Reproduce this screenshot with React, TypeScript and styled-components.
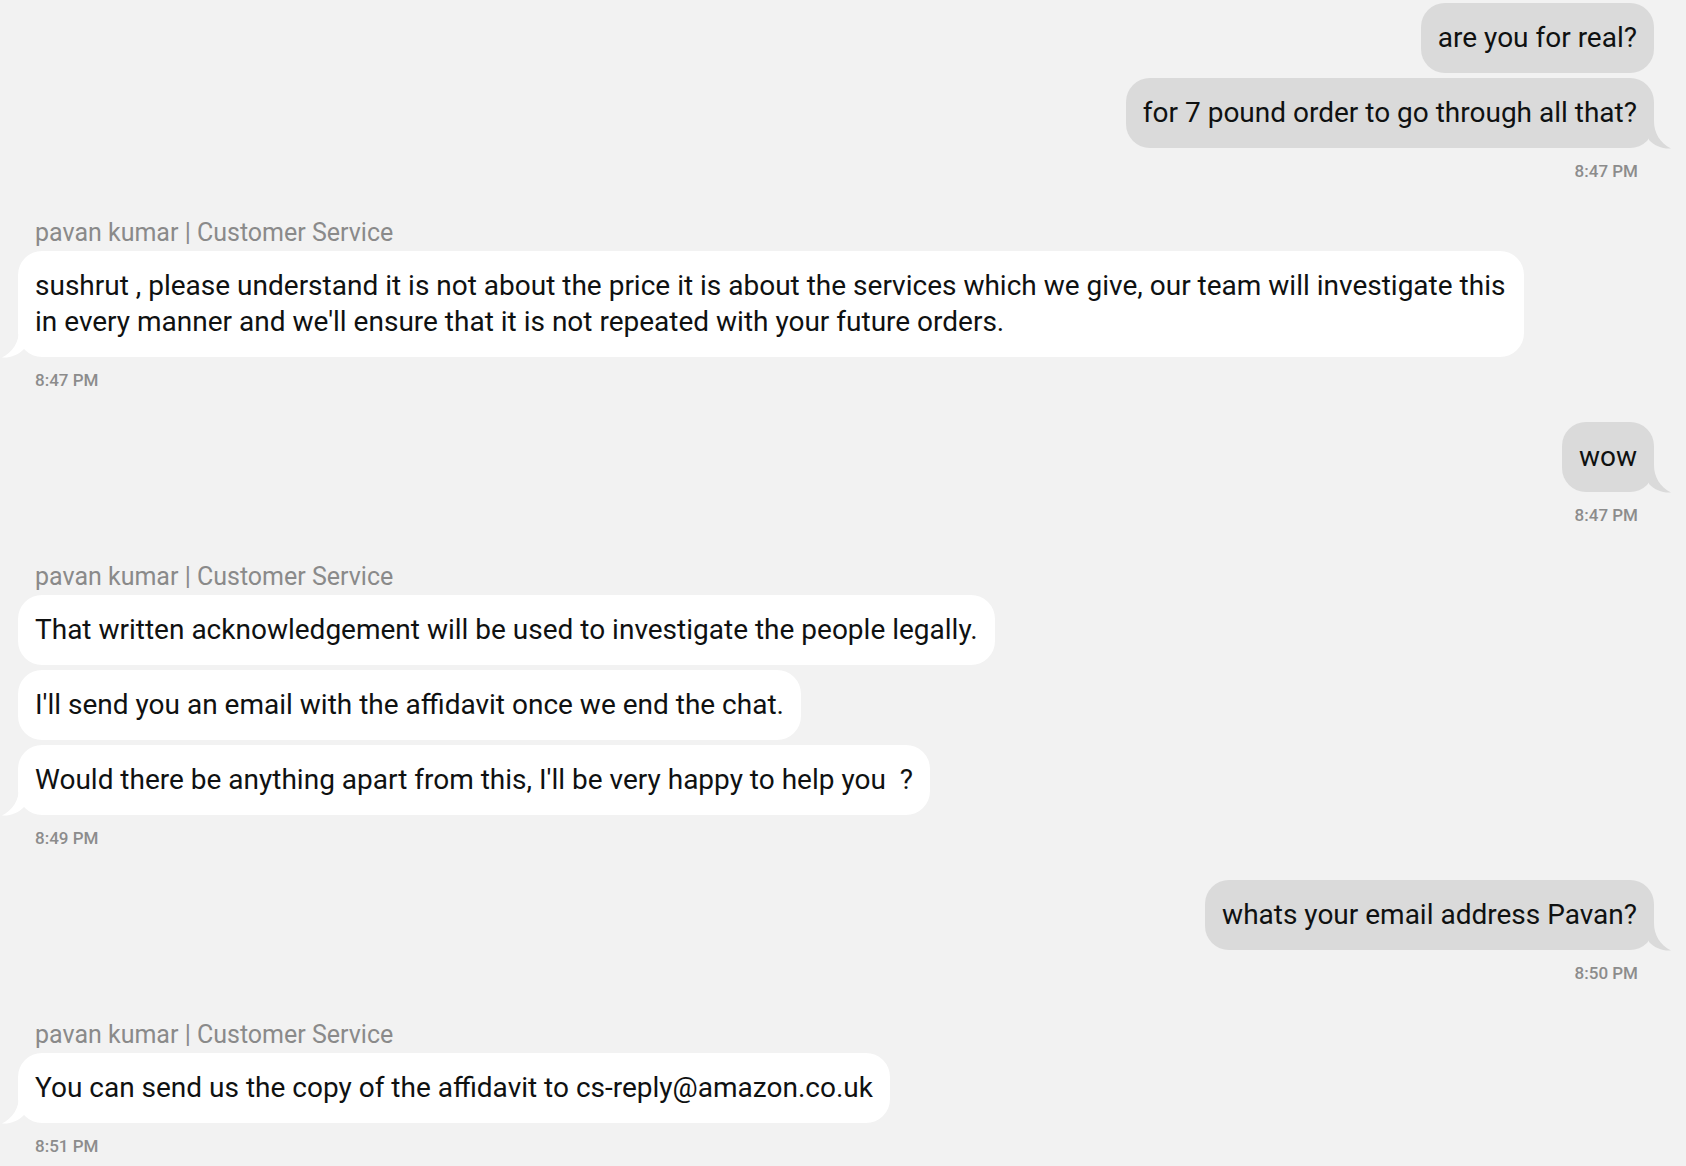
import React from "react";
import styled, { createGlobalStyle } from "styled-components";

const GlobalStyle = createGlobalStyle`
  html, body {
    margin: 0;
    padding: 0;
    background: #f2f2f2;
  }
  body {
    font-family: Roboto, "Liberation Sans", Arial, sans-serif;
    color: #0f1111;
  }
`;

type Side = "out" | "in";

interface Group {
  side: Side;
  sender?: string;
  messages: string[];
  time: string;
}

const groups: Group[] = [
  {
    side: "out",
    messages: ["are you for real?", "for 7 pound order to go through all that?"],
    time: "8:47 PM",
  },
  {
    side: "in",
    sender: "pavan kumar | Customer Service",
    messages: [
      "sushrut , please understand it is not about the price it is about the services which we give, our team will investigate this in every manner and we'll ensure that it is not repeated with your future orders.",
    ],
    time: "8:47 PM",
  },
  { side: "out", messages: ["wow"], time: "8:47 PM" },
  {
    side: "in",
    sender: "pavan kumar | Customer Service",
    messages: [
      "That written acknowledgement will be used to investigate the people legally.",
      "I'll send you an email with the affidavit once we end the chat.",
      "Would there be anything apart from this, I'll be very happy to help you\u00a0 ?",
    ],
    time: "8:49 PM",
  },
  { side: "out", messages: ["whats your email address Pavan?"], time: "8:50 PM" },
  {
    side: "in",
    sender: "pavan kumar | Customer Service",
    messages: ["You can send us the copy of the affidavit to cs-reply@amazon.co.uk"],
    time: "8:51 PM",
  },
];

const Page = styled.main`
  min-height: 100vh;
  box-sizing: border-box;
  padding: 3px 32px 0 18px;
  display: flex;
  flex-direction: column;
  gap: 32px;
  background: #f2f2f2;
`;

const GroupBox = styled.section<{ $side: Side }>`
  display: flex;
  flex-direction: column;
  align-items: ${(p) => (p.$side === "out" ? "flex-end" : "flex-start")};
`;

const Sender = styled.div`
  margin-top: 6px;
  margin-bottom: 4px;
  padding-left: 17px;
  font-size: 25px;
  line-height: 28px;
  color: #8a8a8a;
  font-weight: 400;
`;

const Stack = styled.div<{ $side: Side }>`
  display: flex;
  flex-direction: column;
  align-items: ${(p) => (p.$side === "out" ? "flex-end" : "flex-start")};
  gap: 5px;
  width: 100%;
`;

const Bubble = styled.div<{ $side: Side }>`
  position: relative;
  box-sizing: border-box;
  max-width: 1506px;
  padding: 17px 17px;
  border-radius: 24px;
  font-size: 28px;
  line-height: 36px;
  white-space: pre-wrap;
  color: #0f1111;
  background: ${(p) => (p.$side === "out" ? "#dadada" : "#ffffff")};
`;

const Tail = styled.svg<{ $side: Side }>`
  position: absolute;
  bottom: -1px;
  width: 22px;
  height: 28px;
  ${(p) => (p.$side === "out" ? "right: -17px;" : "left: -16px; transform: scaleX(-1);")}
  fill: ${(p) => (p.$side === "out" ? "#dadada" : "#ffffff")};
`;

const Time = styled.div<{ $side: Side }>`
  margin-top: 13px;
  font-size: 17px;
  line-height: 20px;
  font-weight: 500;
  color: #8c8c8c;
  ${(p) => (p.$side === "out" ? "padding-right: 16px;" : "padding-left: 17px;")}
`;

function BubbleTail({ side }: { side: Side }) {
  return (
    <Tail $side={side} viewBox="0 0 22 28" aria-hidden="true">
      <path d="M0 0 L5 0 C5 12 11 22 22 27.5 C13 28 6 25 0 19 Z" />
    </Tail>
  );
}

export default function App() {
  return (
    <>
      <GlobalStyle />
      <Page>
        {groups.map((g, gi) => (
          <GroupBox key={gi} $side={g.side}>
            {g.sender && <Sender>{g.sender}</Sender>}
            <Stack $side={g.side}>
              {g.messages.map((m, mi) => (
                <Bubble key={mi} $side={g.side}>
                  {m}
                  {mi === g.messages.length - 1 && <BubbleTail side={g.side} />}
                </Bubble>
              ))}
            </Stack>
            <Time $side={g.side}>{g.time}</Time>
          </GroupBox>
        ))}
      </Page>
    </>
  );
}
